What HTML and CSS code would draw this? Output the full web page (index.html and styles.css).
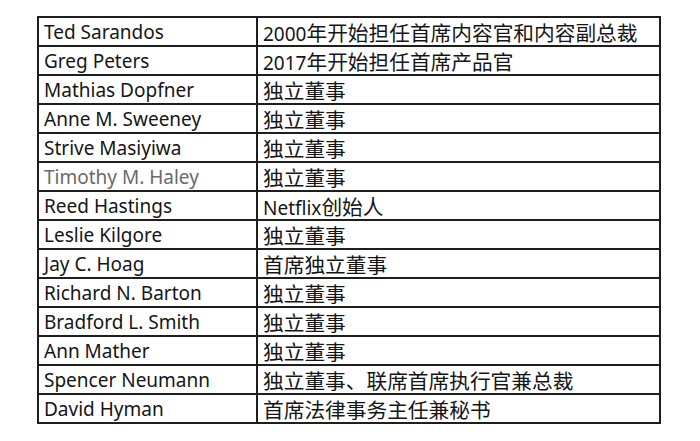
FILE: index.html
```html
<!DOCTYPE html>
<html lang="zh-CN">
<head>
<meta charset="utf-8">
<link rel="stylesheet" href="styles.css">
</head>
<body>
<table class="board">
<colgroup><col class="c-name"><col class="c-role"></colgroup>
<tbody>
<tr><td class="name">Ted Sarandos</td><td class="role"><span class="lat">2000</span>年开始担任首席内容官和内容副总裁</td></tr>
<tr><td class="name">Greg Peters</td><td class="role"><span class="lat">2017</span>年开始担任首席产品官</td></tr>
<tr><td class="name">Mathias Dopfner</td><td class="role">独立董事</td></tr>
<tr><td class="name">Anne M. Sweeney</td><td class="role">独立董事</td></tr>
<tr><td class="name">Strive Masiyiwa</td><td class="role">独立董事</td></tr>
<tr><td class="name muted">Timothy M. Haley</td><td class="role">独立董事</td></tr>
<tr><td class="name">Reed Hastings</td><td class="role"><span class="lat">Netflix</span>创始人</td></tr>
<tr><td class="name">Leslie Kilgore</td><td class="role">独立董事</td></tr>
<tr><td class="name">Jay C. Hoag</td><td class="role">首席独立董事</td></tr>
<tr><td class="name">Richard N. Barton</td><td class="role">独立董事</td></tr>
<tr><td class="name">Bradford L. Smith</td><td class="role">独立董事</td></tr>
<tr><td class="name">Ann Mather</td><td class="role">独立董事</td></tr>
<tr><td class="name">Spencer Neumann</td><td class="role">独立董事、联席首席执行官兼总裁</td></tr>
<tr><td class="name">David Hyman</td><td class="role">首席法律事务主任兼秘书</td></tr>
</tbody>
</table>
</body>
</html>
```
FILE: styles.css
```css
html, body {
  margin: 0;
  padding: 0;
  background: #ffffff;
}
body {
  padding: 16px 0 0 37px;
  font-family: "Noto Sans", "Noto Sans CJK SC", sans-serif;
  color: #151515;
}
.board {
  border-collapse: collapse;
  table-layout: fixed;
  width: 622px;
}
.c-name { width: 219px; }
.c-role { width: 403px; }
.board td {
  border: 2px solid #1e1e1e;
  height: 27px;
  padding: 0 0 0 5px;
  line-height: 24px;
  white-space: nowrap;
  overflow: hidden;
  vertical-align: middle;
}
.board td.name {
  font-size: 19px;
}
.board td.role {
  font-size: 20.7px;
  font-family: "Noto Sans CJK SC", "Noto Sans", sans-serif;
}
.board td.role .lat {
  font-family: "Noto Sans", "Noto Sans CJK SC", sans-serif;
  font-size: 19px;
  line-height: 1;
}
.board td.muted {
  color: #6a6a6a;
}
```
